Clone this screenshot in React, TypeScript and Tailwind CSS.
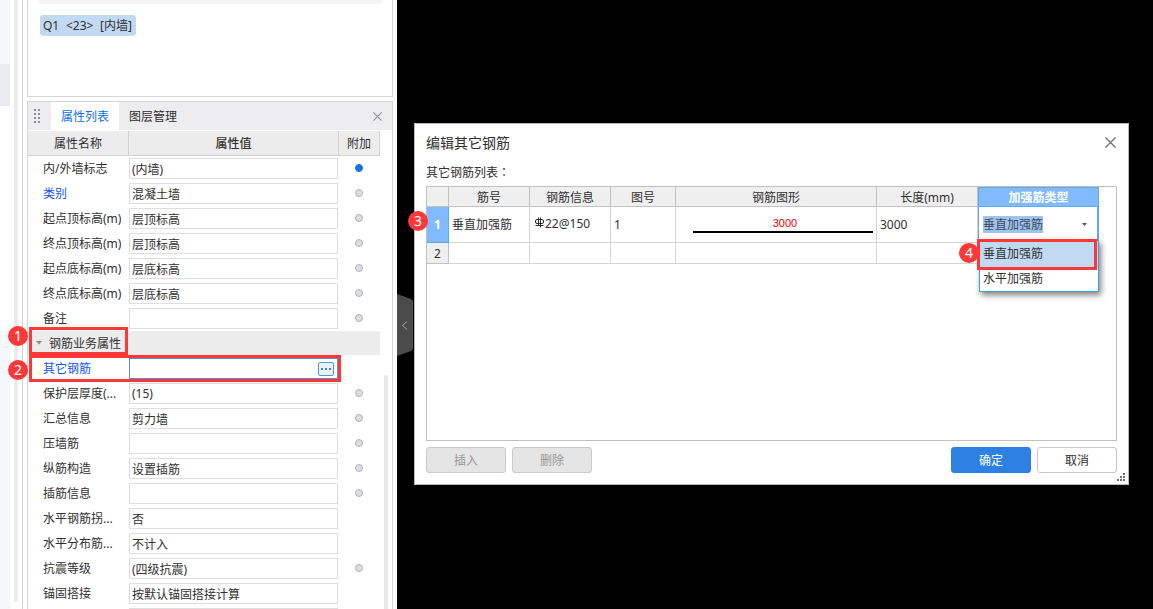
import React from "react";

type Prop = {
  name: string;
  value?: string;
  extra?: boolean;
  checked?: boolean;
  blue?: boolean;
  group?: boolean;
  active?: boolean;
};

const props: Prop[] = [
  { name: "内/外墙标志", value: "(内墙)", extra: true, checked: true },
  { name: "类别", value: "混凝土墙", extra: true, blue: true },
  { name: "起点顶标高(m)", value: "层顶标高", extra: true },
  { name: "终点顶标高(m)", value: "层顶标高", extra: true },
  { name: "起点底标高(m)", value: "层底标高", extra: true },
  { name: "终点底标高(m)", value: "层底标高", extra: true },
  { name: "备注", value: "", extra: true },
  { name: "钢筋业务属性", group: true },
  { name: "其它钢筋", value: "", blue: true, active: true },
  { name: "保护层厚度(...", value: "(15)", extra: true },
  { name: "汇总信息", value: "剪力墙", extra: true },
  { name: "压墙筋", value: "", extra: true },
  { name: "纵筋构造", value: "设置插筋", extra: true },
  { name: "插筋信息", value: "", extra: true },
  { name: "水平钢筋拐...", value: "否" },
  { name: "水平分布筋...", value: "不计入" },
  { name: "抗震等级", value: "(四级抗震)", extra: true },
  { name: "锚固搭接", value: "按默认锚固搭接计算" },
  { name: "", value: "" },
];

function Badge({ n, className }: { n: number; className: string }) {
  return (
    <span
      className={`absolute z-20 flex size-5 items-center justify-center rounded-full bg-[#fd3838] text-sm leading-5 text-white ${className}`}
    >
      {n}
    </span>
  );
}

function Cross({ className }: { className: string }) {
  return (
    <svg className={className} viewBox="0 0 11 11" fill="none" stroke="currentColor" strokeWidth="1.3" aria-hidden="true">
      <path d="M0.5 0.5L10.5 10.5M10.5 0.5L0.5 10.5" />
    </svg>
  );
}

function PropRow({ row, index }: { row: Prop; index: number }) {
  const id = `prop-${index}`;
  if (row.group) {
    return (
      <tr className="h-[25px]">
        <td colSpan={3} className="p-0 align-top">
          <div className="flex h-6 items-center bg-[#ececec] pl-2">
            <button type="button" className="flex items-center gap-[7px] pt-0.5">
              <svg className="mb-0.5 h-1 w-[6px]" viewBox="0 0 6 4" fill="#8a8a8a" aria-hidden="true">
                <path d="M0 0H6L3 3.5Z" />
              </svg>
              {row.name}
            </button>
          </div>
        </td>
      </tr>
    );
  }
  return (
    <tr className="h-[25px]">
      <td className="p-0 pl-[15px]">
        <label htmlFor={id} className={`block whitespace-nowrap ${row.blue ? "text-[#0f54f5]" : ""}`}>
          {row.name}
        </label>
      </td>
      <td className="p-0 pr-px">
        <div className={`flex h-[21px] items-center border bg-white ${row.active ? "border-[#5b8fd8]" : "border-[#dedede]"}`}>
          <input id={id} defaultValue={row.value} className="h-full w-full min-w-0 bg-transparent pl-0.5 outline-none" />
          {row.active && (
            <button
              type="button"
              aria-label="..."
              className="mr-[3px] flex h-[14px] w-4 shrink-0 items-center justify-center gap-px rounded-[2px] border border-[#4f97dc] bg-[#eaf3fc]"
            >
              <i className="size-0.5 bg-[#3d86d0]" />
              <i className="mx-px size-0.5 bg-[#3d86d0]" />
              <i className="size-0.5 bg-[#3d86d0]" />
            </button>
          )}
        </div>
      </td>
      <td className="p-0 pr-0.5 pb-0.5">
        {row.extra && (
          <input
            type="checkbox"
            aria-label={`附加 ${row.name}`}
            defaultChecked={row.checked}
            className="mx-auto block size-2 appearance-none rounded-full border border-[#b2b3b7] bg-[#dcdde1] checked:border-[#1673e6] checked:bg-[#1673e6]"
          />
        )}
      </td>
    </tr>
  );
}

function PropertyPanel() {
  return (
    <section className="relative mt-1 min-h-0 flex-1 border border-b-0 border-[#d6d6d8]">
      <div className="flex h-[29px] items-stretch border-b border-white bg-[#ededef]">
        <div className="grid w-[23px] grid-cols-[2px_2px] content-center justify-center gap-0.5 pr-[5px]">
          {Array.from({ length: 8 }, (_, i) => (
            <i key={i} className="size-0.5 bg-[#8f8f92]" />
          ))}
        </div>
        <button type="button" className="bg-white px-2.5 pt-0.5 text-[#1070e8]">
          属性列表
        </button>
        <button type="button" className="px-2.5 pt-0.5">
          图层管理
        </button>
        <button type="button" aria-label="关闭" className="mr-2.5 ml-auto text-[#8e8e90]">
          <Cross className="size-[9px]" />
        </button>
      </div>
      <table className="mr-3 w-[352px] table-fixed border-separate border-spacing-0">
        <colgroup>
          <col className="w-[101px]" />
          <col className="w-[210px]" />
          <col className="w-[41px]" />
        </colgroup>
        <thead>
          <tr className="h-[25px] bg-[#ececec]">
            <th className="border-r border-b border-[#d2d2d2] p-0 pt-0.5 font-normal">属性名称</th>
            <th className="border-r border-b border-[#d2d2d2] p-0 pt-0.5 font-medium">属性值</th>
            <th className="border-r border-b border-[#d2d2d2] p-0 pt-0.5 font-normal">附加</th>
          </tr>
        </thead>
        <tbody>
          {props.map((p, i) => (
            <PropRow key={i} row={p} index={i} />
          ))}
        </tbody>
      </table>
      <div className="absolute top-[273px] right-1 bottom-0 w-1 rounded-t bg-[#e9e9e9]" />
      <div className="pointer-events-none absolute top-[225px] left-px h-7 w-[99px] border-3 border-[#fd3838]" />
      <div className="pointer-events-none absolute top-[253px] left-px h-[27px] w-[312px] border-3 border-[#fd3838]" />
      <Badge n={1} className="top-[224px] -left-5" />
      <Badge n={2} className="top-[258px] -left-5" />
    </section>
  );
}

const th = "border-r border-b border-[#c2c2c2] bg-[#efefef] p-0 pt-0.5 font-normal leading-4";
const td = "border-r border-b border-[#d4d4d4] p-0 pl-[3px]";

function RebarTable() {
  return (
    <table className="w-[672px] table-fixed border-separate border-spacing-0">
      <colgroup>
        <col className="w-[22px]" />
        <col className="w-[81px]" />
        <col className="w-[81px]" />
        <col className="w-[65px]" />
        <col className="w-[201px]" />
        <col className="w-[101px]" />
        <col className="w-[121px]" />
      </colgroup>
      <thead>
        <tr className="h-5">
          <th className={th} />
          <th className={th}>筋号</th>
          <th className={th}>钢筋信息</th>
          <th className={th}>图号</th>
          <th className={th}>钢筋图形</th>
          <th className={th}>长度(mm)</th>
          <th className="border border-[#62a8ee] bg-[#80baff] p-0 pt-0.5 leading-4 font-bold text-white">加强筋类型</th>
        </tr>
      </thead>
      <tbody>
        <tr className="h-9">
          <th scope="row" className="relative border-r border-b border-[#62a8ee] bg-[#80baff] p-0 font-bold text-white">
            1
            <Badge n={3} className="top-1 -left-[19px] font-normal" />
          </th>
          <td className={td}>垂直加强筋</td>
          <td className={td}>
            <span className="flex items-center pb-0.5 pl-px">
              <svg className="mb-0.5 h-[11px] w-[11px]" viewBox="0 0 11 11" fill="none" stroke="#2a2a2a" aria-hidden="true">
                <rect x="1.5" y="2.5" width="8" height="4" rx="1.5" />
                <path d="M4.5 0.5V8M6.5 0.5V10.5M1.5 8.5H9.5" />
              </svg>
              22@150
            </span>
          </td>
          <td className={td}>1</td>
          <td className="border-r border-b border-[#d4d4d4] p-0 pb-0.5">
            <div className="mr-[3px] ml-[17px] border-b-2 border-black pl-1 text-center font-['Liberation_Sans',Arial,sans-serif] text-[11px] leading-4 text-[#f00000]">
              3000
            </div>
          </td>
          <td className={td}>3000</td>
          <td className="relative border-r-2 border-b border-l border-[#62a8ee] p-0">
            <div className="flex items-center justify-between pr-2.5 pl-1">
              <select
                aria-label="加强筋类型"
                defaultValue="垂直加强筋"
                className="h-[17px] w-[60px] appearance-none bg-[#a0c3ee] p-0 text-[#3c4a5c] outline-none"
              >
                <option>垂直加强筋</option>
                <option>水平加强筋</option>
              </select>
              <svg className="h-[3px] w-[5px]" viewBox="0 0 5 3" fill="#4a5568" aria-hidden="true">
                <path d="M0 0H5L2.5 3Z" />
              </svg>
            </div>
            <ul
              role="listbox"
              aria-label="加强筋类型"
              className="absolute top-[33px] -right-0.5 left-0 z-10 border border-[#3c9fd8] bg-white shadow-[2px_3px_6px_rgba(0,0,0,0.5)]"
            >
              <li role="option" aria-selected="true" className="h-[26px] bg-[#c2d9f2] pl-[3px] leading-[26px]">
                垂直加强筋
              </li>
              <li role="option" aria-selected="false" className="h-6 pl-[3px] leading-6">
                水平加强筋
              </li>
            </ul>
            <div className="pointer-events-none absolute top-8 right-0 -left-[2px] z-20 h-[31px] border-3 border-[#fd3838]" />
            <Badge n={4} className="top-9 -left-5" />
          </td>
        </tr>
        <tr className="h-[21px]">
          <th scope="row" className={th}>
            2
          </th>
          <td className={td} />
          <td className={td} />
          <td className={td} />
          <td className={td} />
          <td className={td} />
          <td className={td} />
        </tr>
      </tbody>
    </table>
  );
}

const btn = "h-[26px] w-20 rounded-[3px] border pt-0.5";

function Dialog() {
  return (
    <section
      role="dialog"
      aria-label="编辑其它钢筋"
      className="relative mt-[123px] mr-6 ml-[17px] border border-[#b9b9b9] bg-white px-[11px] pb-[11px]"
    >
      <header className="flex h-[38px] items-center justify-between text-sm">
        <h1>编辑其它钢筋</h1>
        <button type="button" aria-label="关闭" className="mr-px pb-0.5 text-[#6e6e6e]">
          <Cross className="size-[11px]" />
        </button>
      </header>
      <p className="h-6 leading-5">
        其它钢筋列表<span className="font-['Noto_Sans_CJK_TC',sans-serif]">：</span>
      </p>
      <div className="h-[255px] border border-[#c0c0c0]">
        <RebarTable />
      </div>
      <footer className="mt-1.5 flex gap-1.5">
        <button type="button" disabled className={`${btn} border-[#cbcbcb] bg-[#e5e5e5] text-[#989898]`}>
          插入
        </button>
        <button type="button" disabled className={`${btn} border-[#cbcbcb] bg-[#e5e5e5] text-[#989898]`}>
          删除
        </button>
        <button type="button" className={`${btn} ml-auto border-[#2b80e2] bg-[#2b80e2] text-white`}>
          确定
        </button>
        <button type="button" className={`${btn} border-[#c8c8c8] bg-white`}>
          取消
        </button>
      </footer>
      <svg className="absolute right-[3px] bottom-[3px] size-2" viewBox="0 0 8 8" fill="#6f6f74" aria-hidden="true">
        <path d="M6 0h2v2h-2zM6 3h2v2h-2zM3 3h2v2h-2zM6 6h2v2h-2zM3 6h2v2h-2zM0 6h2v2h-2z" />
      </svg>
    </section>
  );
}

export default function App() {
  return (
    <div className="flex h-screen overflow-hidden bg-white font-['Noto_Sans','Noto_Sans_CJK_SC',sans-serif] text-xs text-[#303030]">
      <aside className="flex w-[23px] shrink-0 gap-1 border-r border-[#d6d6d8]">
        <div className="flex w-2.5 flex-col">
          <div className="h-16 bg-[#f6f7fa]" />
          <div className="h-[42px] bg-[#eaebf0]" />
          <div className="h-56" />
          <div className="flex-1 bg-[#f6f7fa]" />
        </div>
        <div className="mb-[7px] w-1 rounded-b bg-[#ebebeb]" />
      </aside>
      <div className="mr-1 ml-1 flex w-[366px] shrink-0 flex-col">
        <section className="h-[97px] border border-t-0 border-[#d6d6d8] px-2.5">
          <div className="mb-[11px] h-1 rounded-b-full bg-[#f4f4f4]" />
          <button
            type="button"
            className="ml-0.5 flex h-[21px] w-24 items-center justify-between rounded-[3px] bg-[#c1d9f2] pr-1 pl-[3px]"
          >
            <span>Q1</span> <span>&lt;23&gt;</span> <span>[内墙]</span>
          </button>
        </section>
        <PropertyPanel />
      </div>
      <main className="relative min-w-0 flex-1 bg-black">
        <button type="button" aria-label="收起" className="absolute top-[294px] left-0 h-[62px] w-4">
          <svg className="h-full w-full" viewBox="0 0 16 62" aria-hidden="true">
            <path d="M0 0L14 5Q16 6 16 8V54Q16 56 14 57L0 62Z" fill="#4b4b4b" />
            <path d="M10 27.5L5.5 31.5L10 35.5" fill="none" stroke="#a0a0a0" />
          </svg>
        </button>
        <div className="flow-root">
          <Dialog />
        </div>
      </main>
    </div>
  );
}
